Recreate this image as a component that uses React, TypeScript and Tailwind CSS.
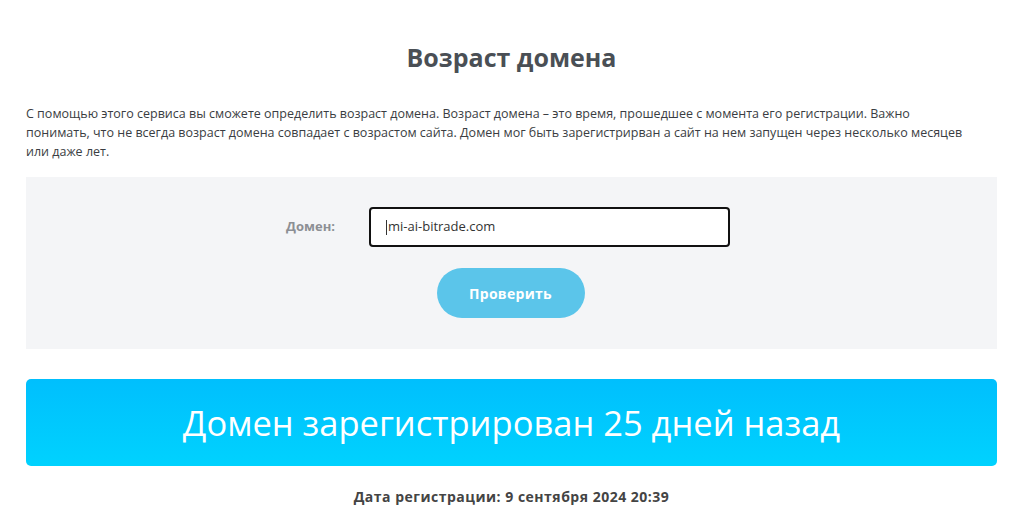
export default function App() {
    return (
        <div className="min-h-screen bg-white pl-[26px] pr-[20px] pt-[40px] text-[#3b3f44]" style={{ fontFamily: '"Open Sans", "Noto Sans", sans-serif' }}>
            <h1 className="text-center text-[25px] font-bold leading-[34px] text-[#4a4f55]">Возраст домена</h1>

            <p className="mt-[30px] text-[12.5px] leading-[19px] text-[#3a3d42]">
                С помощью этого сервиса вы сможете определить возраст домена. Возраст домена – это время, прошедшее с момента его регистрации. Важно
                <br />
                понимать, что не всегда возраст домена совпадает с возрастом сайта. Домен мог быть зарегистрирван а сайт на нем запущен через несколько месяцев
                <br />
                или даже лет.
            </p>

            <div className="mt-[16px] flex h-[172px] flex-col items-center bg-[#f4f5f7] pt-[30px]">
                <div className="flex items-center pr-[8px]">
                    <label className="w-[84px] pl-[1px] text-[13px] font-bold text-[#8c8f94]">Домен:</label>
                    <div className="flex h-[40px] w-[361px] items-center rounded-[4px] border-2 border-[#111] bg-white pl-[15px] text-[13px] text-[#333]">
                        <span className="mr-[1px] h-[15px] w-px bg-[#333]" />
                        mi-ai-bitrade.com
                    </div>
                </div>
                <button
                    type="button"
                    className="mt-[21px] mr-[2px] h-[50px] w-[148px] rounded-full bg-[#5bc5ea] text-[14px] font-bold tracking-[0.3px] text-white"
                >
                    Проверить
                </button>
            </div>

            <div className="mt-[30px] flex h-[87px] items-center justify-center rounded-[5px] bg-gradient-to-b from-[#00bffd] to-[#00d2fe]">
                <span className="text-[34.5px] font-normal text-white">Домен зарегистрирован 25 дней назад</span>
            </div>

            <p className="mt-[20px] text-center text-[14px] font-bold tracking-[0.5px] text-[#444]">Дата регистрации: 9 сентября 2024 20:39</p>
        </div>
    );
}
